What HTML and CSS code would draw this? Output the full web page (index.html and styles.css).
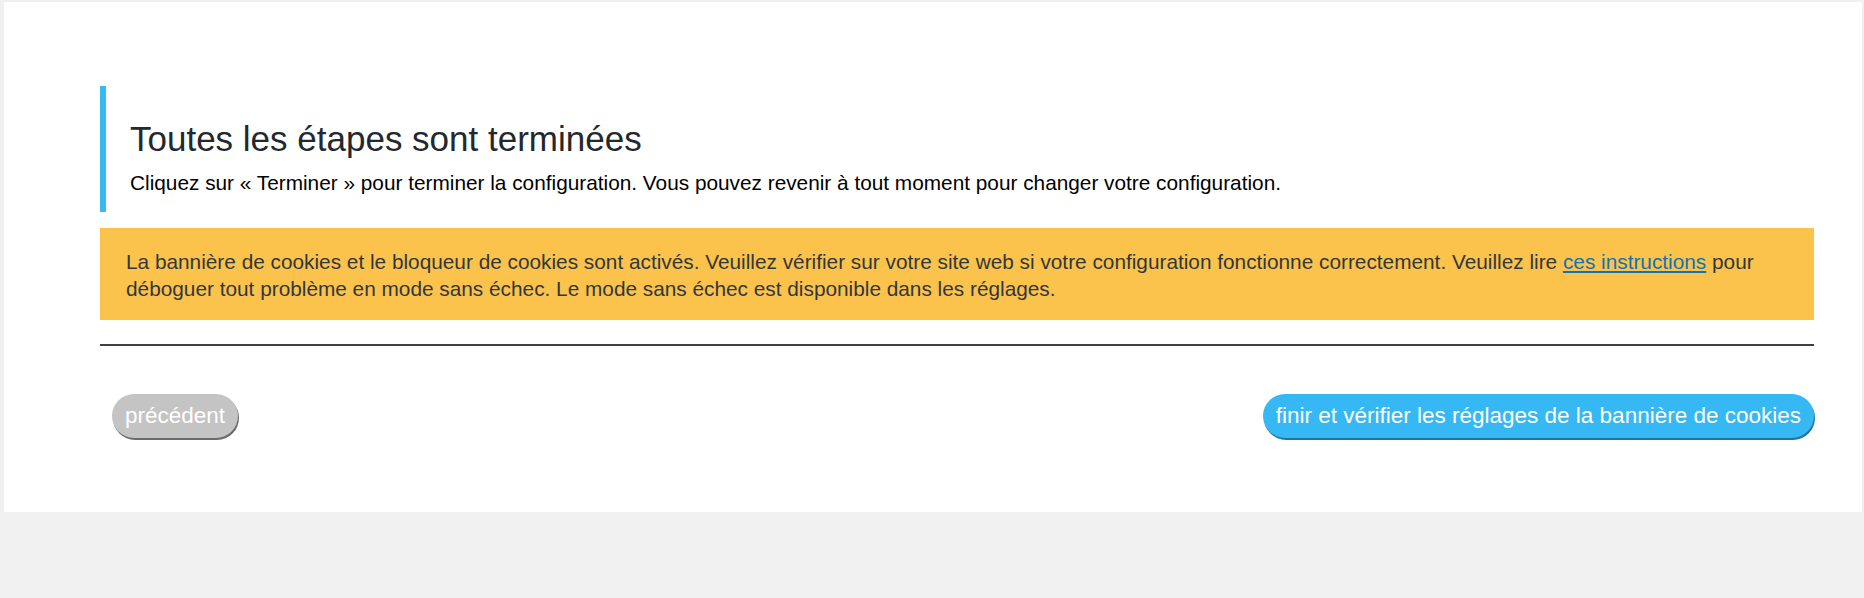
FILE: index.html
```html
<!DOCTYPE html>
<html>
<head>
  <title>Assistant de configuration</title>
  <link rel="stylesheet" href="styles.css">
</head>
<body>
  <div class="wizard">
    <div class="step-header">
      <h2>Toutes les étapes sont terminées</h2>
      <p>Cliquez sur « Terminer » pour terminer la configuration. Vous pouvez revenir à tout moment pour changer votre configuration.</p>
    </div>

    <div class="notice-warning">
      <p>La bannière de cookies et le bloqueur de cookies sont activés. Veuillez vérifier sur votre site web si votre configuration fonctionne correctement. Veuillez lire <a href="#">ces instructions</a> pour déboguer tout problème en mode sans échec. Le mode sans échec est disponible dans les réglages.</p>
    </div>

    <hr class="divider">

    <div class="wizard-footer">
      <button type="button" class="btn btn-prev">précédent</button>
      <button type="button" class="btn btn-finish">finir et vérifier les réglages de la bannière de cookies</button>
    </div>
  </div>
</body>
</html>
```

FILE: styles.css
```css
html {
  font-family: 'Liberation Sans', Arial, sans-serif;
}

body {
  margin: 0;
  background: #f0f0f0;
}

.wizard {
  background: #fff;
  margin: 2px 2px 0 4px;
  height: 510px;
  box-sizing: border-box;
  padding: 84px 48px 0 96px;
}

.step-header {
  border-left: 6px solid #36b9f4;
  padding: 33px 0 16px 24px;
}

.step-header h2 {
  margin: 0;
  font-size: 35px;
  line-height: 40px;
  font-weight: normal;
  color: #23282d;
}

.step-header p {
  margin: 10px 0 0;
  font-size: 20.8px;
  line-height: 27px;
  color: #000;
}

.notice-warning {
  background: #fbc34c;
  margin-top: 16px;
  padding: 20px 26px 18px;
}

.notice-warning p {
  margin: 0;
  font-size: 20.8px;
  line-height: 27px;
  color: #32373c;
}

.notice-warning a {
  color: #0f73b6;
}

.divider {
  margin: 24px 0 0;
  border: 0;
  height: 2px;
  background: #404040;
}

.wizard-footer {
  display: flex;
  justify-content: space-between;
  margin-top: 48px;
  padding-left: 12px;
}

.btn {
  font-family: inherit;
  font-size: 22.5px;
  color: #fff;
  border: 0;
  border-radius: 23px;
  height: 44px;
  padding: 0 13px;
}

.btn-prev {
  background: #c4c4c4;
  box-shadow: 1px 2px 0 #6b6b6b;
}

.btn-finish {
  background: #36b8f5;
  box-shadow: 1px 2px 0 #25739c;
}
```
